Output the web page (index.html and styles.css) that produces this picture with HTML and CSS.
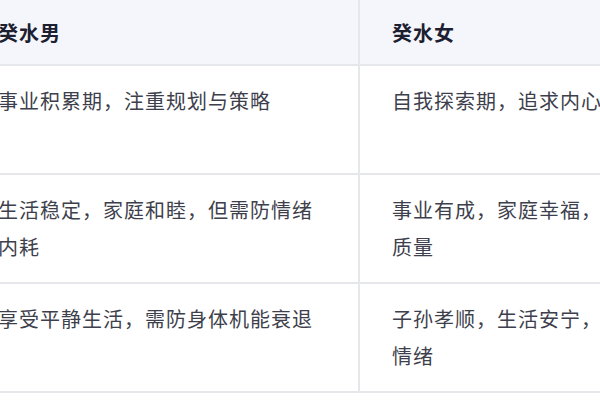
FILE: index.html
```html
<!DOCTYPE html>
<html lang="zh-CN">
<head>
<meta charset="utf-8">
<link rel="stylesheet" href="styles.css">
</head>
<body>
<div class="table">
  <div class="cell head left">癸水男</div>
  <div class="cell head right">癸水女</div>

  <div class="cell left">事业积累期，注重规划与策略</div>
  <div class="cell right">自我探索期，追求内心平衡</div>

  <div class="cell left">生活稳定，家庭和睦，但需防情绪内耗</div>
  <div class="cell right">事业有成，家庭幸福，更注重生活质量</div>

  <div class="cell left">享受平静生活，需防身体机能衰退</div>
  <div class="cell right">子孙孝顺，生活安宁，需注意调节情绪</div>
</div>
</body>
</html>
```

FILE: styles.css
```css
html, body {
  margin: 0;
  padding: 0;
  background: #ffffff;
  overflow: hidden;
}

body {
  width: 600px;
  height: 400px;
  font-family: "Noto Sans CJK SC", "Noto Sans", sans-serif;
}

.table {
  display: grid;
  grid-template-columns: 393px 380px;
  margin-left: -33px;
  margin-top: -3px;
}

.cell {
  box-sizing: border-box;
  height: 109px;
  padding: 16px 31px 0 31px;
  border-bottom: 2px solid #e6e7eb;
  font-size: 20px;
  letter-spacing: 1px;
  line-height: 37px;
  color: #3e3f4c;
  background: #ffffff;
}

.cell.left {
  border-right: 2px solid #e6e7eb;
}

.cell.right {
  padding-left: 32px;
}

.cell.head {
  height: 69px;
  padding-top: 17px;
  background: #f4f6fb;
  color: #1c2030;
  font-weight: 700;
}
```
